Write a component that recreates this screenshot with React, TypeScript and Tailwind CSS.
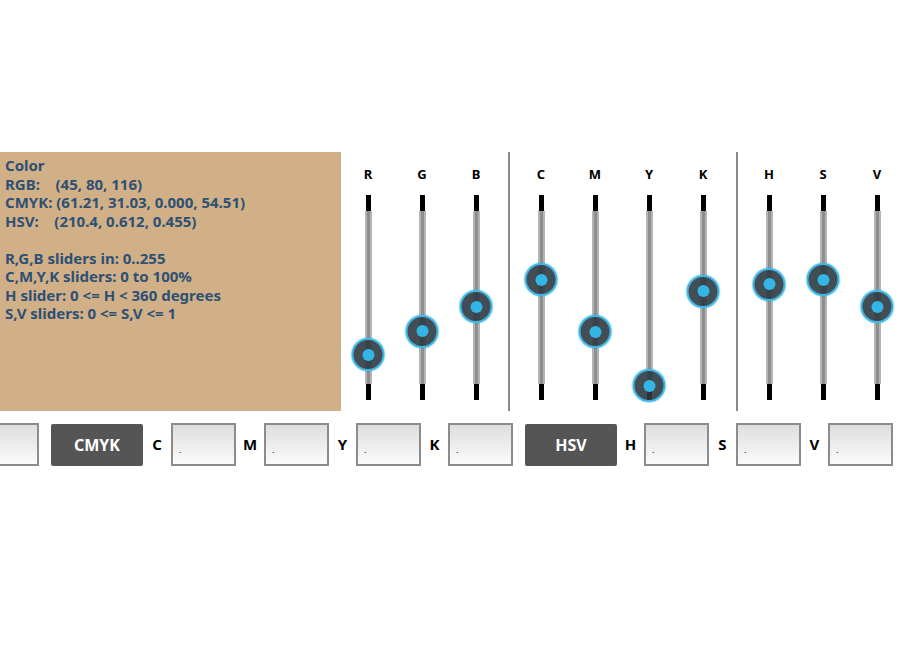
import React from 'react';

type Slider = { label: string; frac: number };

const groups: Slider[][] = [
  [
    { label: 'R', frac: 45 / 255 },
    { label: 'G', frac: 80 / 255 },
    { label: 'B', frac: 116 / 255 },
  ],
  [
    { label: 'C', frac: 0.6121 },
    { label: 'M', frac: 0.3103 },
    { label: 'Y', frac: 0 },
    { label: 'K', frac: 0.5451 },
  ],
  [
    { label: 'H', frac: 210.4 / 360 },
    { label: 'S', frac: 0.612 },
    { label: 'V', frac: 0.455 },
  ],
];

const infoLines = [
  'Color',
  'RGB:    (45, 80, 116)',
  'CMYK: (61.21, 31.03, 0.000, 54.51)',
  'HSV:    (210.4, 0.612, 0.455)',
  '',
  'R,G,B sliders in: 0..255',
  'C,M,Y,K sliders: 0 to 100%',
  'H slider: 0 <= H < 360 degrees',
  'S,V sliders: 0 <= S,V <= 1',
];

function VSlider({ label, frac }: Slider) {
  // knob centre travels over the grey part of the track (173px)
  const top = 190 - frac * 173 - 16;
  return (
    <div className="w-[54px] shrink-0 flex flex-col items-center">
      <div className="mt-[14px] h-4 text-[13px] leading-4 font-bold text-black">{label}</div>
      <div className="relative mt-[13px] flex flex-col items-center">
        <div className="w-[5px] h-4 bg-black" />
        <div className="w-[7px] h-[173px] bg-[#b4b4b4] flex justify-center">
          <div className="w-[3px] h-full bg-[#8e8e8e]" />
        </div>
        <div className="w-[5px] h-4 bg-black" />
        <div
          className="absolute left-1/2 -translate-x-1/2 w-[33px] h-[33px] rounded-full border-2 border-[#3fb8e4] bg-[#2e3a42]/90 shadow-[0_0_2px_#33b5e5] flex items-center justify-center"
          style={{ top }}
        >
          <div className="w-3 h-3 rounded-full bg-[#33b5e5]" />
        </div>
      </div>
    </div>
  );
}

function Field({ className = '', dot = true }: { className?: string; dot?: boolean }) {
  return (
    <div
      className={`w-[65px] h-[43px] shrink-0 border-2 border-[#8c8c8c] bg-gradient-to-b from-[#dedede] to-[#fbfbfb] flex items-end pl-[6px] pb-[10px] ${className}`}
    >
      {dot && <span className="text-[9px] leading-none text-black">.</span>}
    </div>
  );
}

function Label({ text, className = '' }: { text: string; className?: string }) {
  return <div className={`shrink-0 text-[15px] font-bold text-black text-center ${className}`}>{text}</div>;
}

function ModeButton({ text }: { text: string }) {
  return (
    <div className="w-[92px] h-[42px] shrink-0 rounded-[2px] bg-[#555555] flex items-center justify-center text-white font-bold text-[16px]">
      {text}
    </div>
  );
}

export default function App() {
  return (
    <div className="w-[900px] h-[650px] bg-white overflow-hidden pt-[152px]" style={{ fontFamily: '"Noto Sans", "Open Sans", sans-serif' }}>
      <div className="flex h-[259px]">
        <div className="w-[341px] shrink-0 bg-[#d2b087] pl-[5px] pt-[4px] text-[#2d5074] font-bold text-[15px] leading-[18.5px]">
          {infoLines.map((line, i) => (
            <div key={i} className="whitespace-pre h-[18.5px]">{line}</div>
          ))}
        </div>
        <div className="flex">
          {groups.map((g, gi) => (
            <React.Fragment key={gi}>
              {gi > 0 && <div className={`w-[2px] h-full bg-[#8a8a8a] shrink-0 ${gi === 1 ? 'ml-[5px] mr-[4px]' : 'ml-[6px] mr-[4px]'}`} />}
              {g.map((s) => (
                <VSlider key={s.label} {...s} />
              ))}
            </React.Fragment>
          ))}
        </div>
      </div>

      <div className="flex items-center mt-[12px] ml-[-26px]">
        <Field dot={false} />
        <div className="ml-[12px]"><ModeButton text="CMYK" /></div>
        <Label text="C" className="w-[28px]" />
        <Field />
        <Label text="M" className="w-[28px]" />
        <Field />
        <Label text="Y" className="w-[27px]" />
        <Field />
        <Label text="K" className="w-[27px]" />
        <Field />
        <div className="ml-[12px]"><ModeButton text="HSV" /></div>
        <Label text="H" className="w-[27px]" />
        <Field />
        <Label text="S" className="w-[27px]" />
        <Field />
        <Label text="V" className="w-[27px]" />
        <Field />
      </div>
    </div>
  );
}
